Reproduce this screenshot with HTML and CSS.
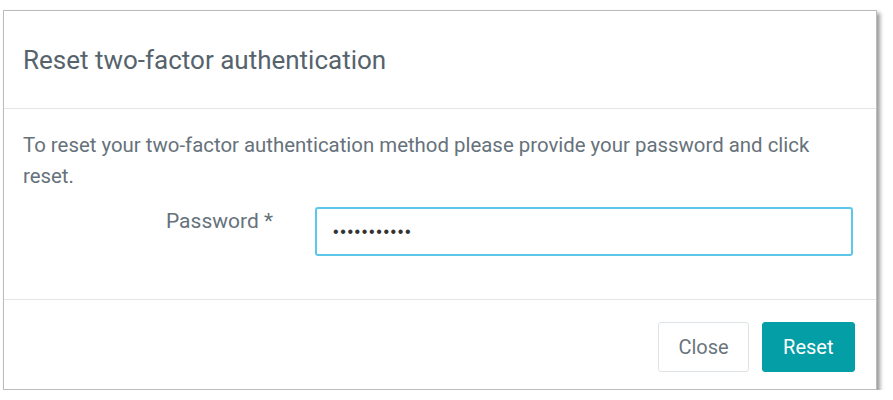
FILE: index.html
```html
<!DOCTYPE html>
<html lang="en">
<head>
    <meta charset="UTF-8">
    <title>Reset two-factor authentication</title>
    <link rel="stylesheet" href="styles.css">
</head>
<body>
    <div class="dialog">
        <div class="dialog-header">
            <h2 class="dialog-title">Reset two-factor authentication</h2>
        </div>

        <div class="dialog-body">
            <p class="intro">To reset your two-factor authentication method please provide your password and click reset.</p>
            <div class="form-row">
                <label for="password">Password *</label>
                <input type="password" id="password" value="secretpass1">
            </div>
        </div>

        <div class="dialog-footer">
            <button class="btn btn-default">Close</button>
            <button class="btn btn-primary">Reset</button>
        </div>
    </div>
</body>
</html>
```

FILE: styles.css
```css
body {
    margin: 0;
    background-color: #ffffff;
    font-family: Roboto, "Liberation Sans", Arial, sans-serif;
}
.dialog {
    margin: 10px 0 0 3px;
    width: 874px;
    box-sizing: border-box;
    background-color: #ffffff;
    border: 1px solid #bcbcbc;
    box-shadow: 3px 3px 4px rgba(0,0,0,.4);
}
.dialog-header {
    height: 97px;
    padding: 0 19px;
    display: flex;
    align-items: center;
    border-bottom: 1px solid #e6e6e6;
}
.dialog-title {
    margin: 0;
    font-size: 26px;
    font-weight: 400;
    color: #56636c;
}
.dialog-body {
    padding: 21px 19px 43px;
    border-bottom: 1px solid #e6e6e6;
}
.intro {
    margin: 0 0 15px;
    padding-right: 30px;
    font-size: 20.4px;
    line-height: 31px;
    color: #66727b;
}
.form-row {
    display: grid;
    grid-template-columns: 250px 538px;
    column-gap: 42px;
}
label {
    text-align: right;
    font-size: 21px;
    line-height: 28px;
    color: #66727b;
}
input[type="password"] {
    height: 49px;
    box-sizing: border-box;
    padding: 0 16px;
    border: 2px solid #5bc8ea;
    border-radius: 3px;
    font-size: 16px;
    letter-spacing: 1.6px;
    color: #333;
    outline: none;
}
.dialog-footer {
    padding: 22px 21px 17px;
    display: flex;
    justify-content: flex-end;
    gap: 13px;
}
.btn {
    height: 50px;
    padding: 0 19px;
    font-family: Roboto, "Liberation Sans", Arial, sans-serif;
    font-size: 20px;
    border-radius: 3px;
    cursor: pointer;
}
.btn-default {
    background-color: #ffffff;
    border: 1px solid #dde3e6;
    color: #6a757d;
}
.btn-primary {
    padding: 0 20.5px;
    background-color: #049ea6;
    border: 1px solid #049ea6;
    color: #ffffff;
}
```
